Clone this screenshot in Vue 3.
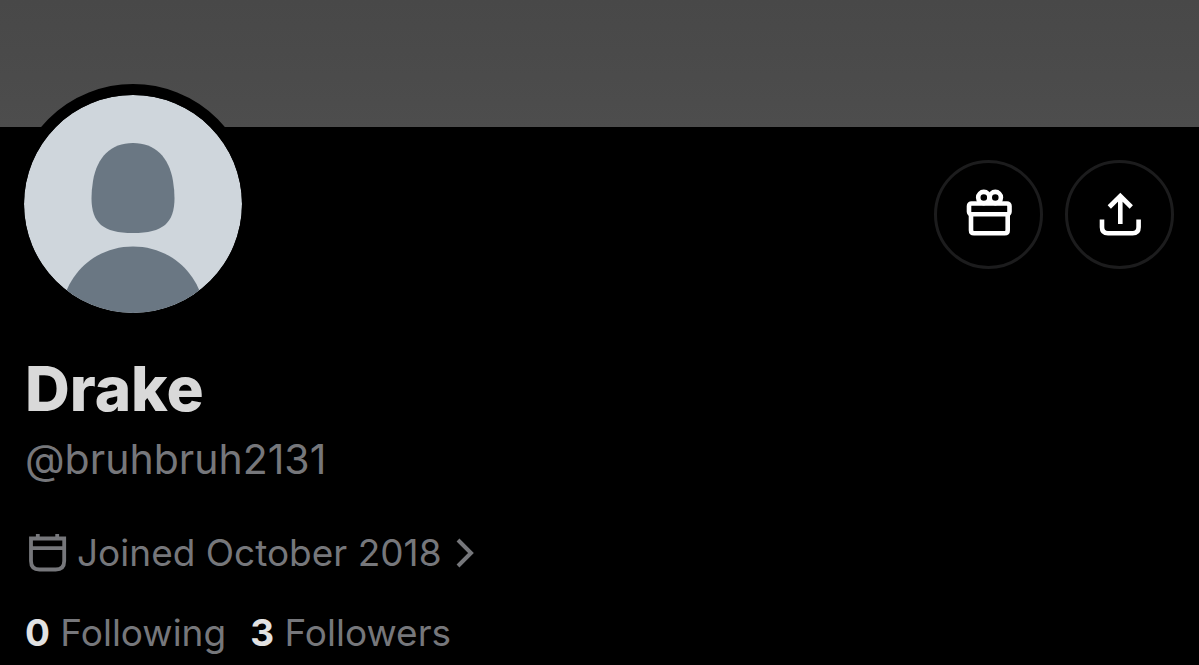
<script setup>
const profile = {
  name: 'Drake',
  handle: '@bruhbruh2131',
  joined: 'Joined October 2018',
  following: 0,
  followers: 3,
}
</script>

<template>
  <main class="profile">
    <div class="banner"></div>
    <div class="body">
      <div class="top">
        <div class="avatar">
          <svg viewBox="0 0 218 218" role="img" aria-label="Profile picture">
            <rect width="218" height="218" fill="#cfd6dc" />
            <path
              d="M109 48C131 48 145 62 149 86Q150.500 95 150.500 103C150.500 128 139 138 109 138C79 138 67.500 128 67.500 103Q67.500 95 69 86C73 62 87 48 109 48Z"
              fill="#6a7783"
            />
            <path d="M38 218V210C46 173 76 151.500 109 151.500C142 151.500 172 173 180 210V218Z" fill="#6a7783" />
          </svg>
        </div>
        <div class="actions">
          <button type="button" class="round" aria-label="Gift">
            <svg viewBox="0 0 48 48" width="48" height="48" fill="none" stroke="#fff" stroke-width="4.6">
              <circle cx="18.800" cy="6.500" r="5.600" />
              <circle cx="30.300" cy="6.500" r="5.600" />
              <rect x="4" y="12.500" width="40.500" height="10.800" rx="2.500" />
              <path d="M6 23.300V39.200Q6 42.200 9 42.200H39.700Q42.700 42.200 42.700 39.200V23.300" />
            </svg>
          </button>
          <button type="button" class="round" aria-label="Share">
            <svg viewBox="0 0 48 48" width="48" height="48" fill="none" stroke="#fff" stroke-width="4.6">
              <path d="M24.300 33V6M13.300 16L24.300 5L35.300 16" />
              <path d="M6 28.500V36.200Q6 42.200 12 42.200H36.600Q42.600 42.200 42.600 36.200V28.500" />
            </svg>
          </button>
        </div>
      </div>
      <h1 class="name">{{ profile.name }}</h1>
      <p class="handle">{{ profile.handle }}</p>
      <button type="button" class="joined">
        <svg viewBox="0 0 44 40" width="44" height="40" fill="none" stroke="#76777b" stroke-width="3.800">
          <path d="M6 5.500H39.200V28Q39.200 36.500 30.700 36.500H14.500Q6 36.500 6 28ZM6 15.200H39.200M12.800 1V5M32.200 1V5" />
        </svg>
        <span>{{ profile.joined }}</span>
        <svg class="chevron" viewBox="0 0 20 32" width="20" height="32" fill="none" stroke="#76777b" stroke-width="4">
          <path d="M2 3L15 16L2 29" />
        </svg>
      </button>
      <nav class="counts">
        <a href="#following"><strong>{{ profile.following }}</strong> Following</a>
        <a href="#followers"><strong>{{ profile.followers }}</strong> Followers</a>
      </nav>
    </div>
  </main>
</template>

<style>
body {
  margin: 0;
  background: #000;
}
</style>

<style scoped>
.profile {
  font-family: Inter, "Liberation Sans", sans-serif;
  color: #76777b;
  background: #000;
}
.banner {
  height: 127px;
  background: linear-gradient(#484848, #4d4d4d);
}
.body {
  padding: 0 25px;
}
.top {
  display: flex;
  justify-content: space-between;
  align-items: flex-start;
}
.avatar {
  box-sizing: border-box;
  width: 240px;
  height: 240px;
  margin: -43px 0 0 -12px;
  border: 11px solid #000;
  border-radius: 50%;
  overflow: hidden;
  background: #000;
}
.avatar svg {
  display: block;
  width: 100%;
  height: 100%;
  border-radius: 50%;
}
.actions {
  display: flex;
  gap: 22px;
  padding-top: 33px;
}
.round {
  display: flex;
  align-items: center;
  justify-content: center;
  width: 109px;
  height: 109px;
  padding: 0;
  border: 3px solid #1c1c1d;
  border-radius: 50%;
  background: #000;
}
.round svg {
  overflow: visible;
}
.name {
  margin: 29px 0 0;
  font-size: 62px;
  line-height: 72px;
  font-weight: 800;
  color: #d9d9d9;
}
.handle {
  margin: 6px 0 0;
  font-size: 41px;
  line-height: 56px;
}
.joined {
  display: flex;
  align-items: center;
  gap: 8px;
  margin: 42px 0 0;
  padding: 0;
  border: 0;
  background: none;
  color: inherit;
  font-family: inherit;
  font-size: 37px;
  line-height: 48px;
}
.chevron {
  margin-left: 6px;
}
.counts {
  display: flex;
  gap: 24px;
  margin-top: 32px;
  font-size: 37px;
  line-height: 48px;
}
.counts a {
  color: inherit;
  text-decoration: none;
}
.counts strong {
  font-weight: 700;
  color: #e2e2e2;
}
</style>
